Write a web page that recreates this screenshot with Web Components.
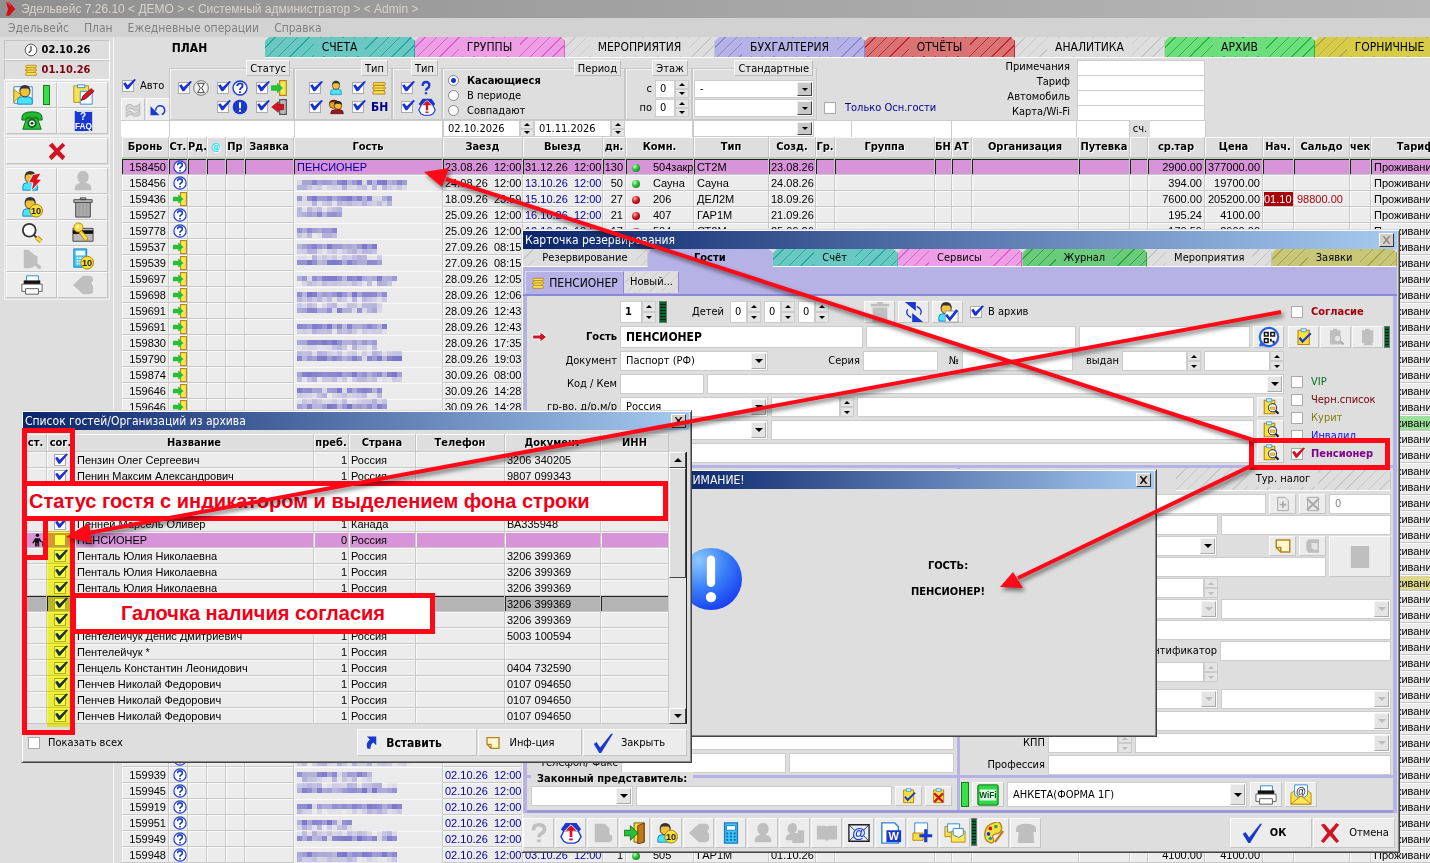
<!DOCTYPE html>
<html lang="ru">
<head>
<meta charset="utf-8">
<title>Эдельвейс 7.26.10</title>
<style>
html,body{margin:0;height:100%;overflow:hidden;background:#dedede}
</style>
</head>
<body>
<pms-app></pms-app>
<script>
const BASE = `
*{box-sizing:border-box}
:host{display:block;font:11px/14px "DejaVu Sans Condensed","Liberation Sans",sans-serif;color:#000}
:host([hidden]){display:none}
button,input,select{font:inherit;color:inherit;margin:0;border-radius:0;min-width:0}
.b{display:flex;align-items:center;justify-content:center;gap:8px;padding:0;background:#ececec;border:1px solid;border-color:#fafafa #c4c4c4 #c4c4c4 #fafafa;white-space:nowrap;flex:none}
.t{background:#fff;border:1px solid #ccc;padding:0 5px;outline:0}
.c{appearance:none;width:12px;height:12px;background:#fff;border:1px solid #aaa;flex:none;display:grid}
.c:checked::before{content:"";width:14px;height:11px;margin:-2px 0 0 -1px;background:#1830d8;clip-path:polygon(8% 45%,24% 35%,40% 62%,88% 5%,100% 12%,44% 98%,32% 98%)}
.c.red:checked::before{background:#d01020}
label{white-space:nowrap}
.r{display:flex;align-items:stretch;gap:3px}
.lb{display:flex;align-items:center;justify-content:flex-end;white-space:nowrap;flex:none}
.g{flex:1}
.led{width:8px;border:1px solid #777;background:repeating-linear-gradient(#063 0 2px,#021 2px 3px);flex:none}
.led.on{background:#38e048;border-color:#1a7a20}
`;
function define(name, html, css = "", setup) {
  const tpl = document.createElement("template");
  customElements.define(name, class extends HTMLElement {
    connectedCallback() {
      if (this.shadowRoot) return;
      tpl.innerHTML = `<style>${BASE}${css}</style>` + (typeof html === "function" ? html(this) : html);
      this.attachShadow({ mode: "open" }).append(tpl.content.cloneNode(true));
      if (setup) setup(this.shadowRoot, this);
    }
  });
}

/* ---------- icons ---------- */
const man = (x = 0) => `<g transform="translate(${x})"><path d="M3 22v-4q0-4 4-4h8q4 0 4 4v4z" fill="#48e4fa" stroke="#1880d0"/><circle cx="11" cy="8.500" r="5.500" fill="#f0c238" stroke="#333"/><path d="M5 8q0-7 6-7t6 7l-2-3H7z" fill="#333"/></g>`;
const coin = `<circle cx="16.500" cy="16" r="7" fill="#fadf38" stroke="#a07a18"/><text x="16.500" y="20" text-anchor="middle" font-family="Liberation Sans" font-weight="700" font-size="10" fill="#222">10</text>`;
const clip = `<path d="M4 3h15v19H4z" fill="#f8e438" stroke="#b88418" stroke-width="1.500"/><path d="M8 1h7v4H8z" fill="#d8f4ff" stroke="#2888d0"/>`;
const G = "#bfbfbf";
const ICONS = {
  logo: `<path d="M6 2h5l9 10-9 10H6l3-10z" fill="#d01018"/><path d="M6 2l5 0 3 6z" fill="#ff4050"/>`,
  clock: `<circle cx="12" cy="12" r="10" fill="#fff" stroke="#444" stroke-width="1.500"/><path d="M12 5v8l-4 4" fill="none" stroke="#222" stroke-width="1.800"/>`,
  coins: `<path d="M4 4h17v3l-2 2 3 3-3 3 2 3v3H3v-3l2-3-3-3 3-3-2-2z" fill="#fae858" stroke="#b88418" stroke-width="1.500"/><path d="M4 8h16M3 12h17M4 16h16" stroke="#b88418" stroke-width="1.700"/>`,
  client: `<path d="M1 3h20v18H1z" fill="#fff" stroke="#2888d8"/><path d="M1 6l8 6-8 8z" fill="#f4dc40" stroke="#b88418"/>${man(2)}`,
  notes: `<path d="M2 2h16v18H2z" fill="#f8e450" stroke="#b88418"/><path d="M6 1h8v3H6z" fill="#fff" stroke="#2888d0"/><path d="M9 8h13v14H9z" fill="#fff" stroke="#2888d0"/><path d="M10 18l2-5 9-8 3 3-9 8z" fill="#d81828" stroke="#801018"/>`,
  phone: `<path d="M1 8q0-6 11-6t11 6v3h-6V8H7v3H1z" fill="#20b830" stroke="#0a6818"/><path d="M6 9h12l4 12H2z" fill="#28c038" stroke="#0a6818"/><circle cx="12" cy="14.500" r="4" fill="#fff" stroke="#0a6818" stroke-width="2"/><circle cx="12" cy="14.500" r="1.500" fill="#222"/>`,
  faq: `<path d="M3 1h19v22H3z" fill="#1838d0"/><path d="M5 1h17v1H5z" fill="#fff"/><text x="12" y="11" text-anchor="middle" font-family="Liberation Sans" font-weight="700" font-size="11" fill="#fff">?</text><text x="12.500" y="21" text-anchor="middle" font-family="Liberation Sans" font-weight="700" font-size="9" fill="#fff">FAQ</text>`,
  cross: `<path d="M3 6l4-3 5 6 6-6 3 3-6 6 6 6-3 4-6-6-6 6-3-4 6-6z" fill="#d01424"/>`,
  bolt: `${man(-1)}<path d="M13 5l9-2-4 7h5L11 23l2-9H8z" fill="#e01020" stroke="#fff"/>`,
  gman: `<path d="M3 22v-3q1-4 6-5-4-3-3-8 1-5 6-5t6 5q1 5-3 8 5 1 6 5v3z" fill="${G}"/>`,
  man10: man(-1) + coin,
  trash: `<path d="M4 7h16v16H4z" fill="#aaa" stroke="#444"/><path d="M2 4h20v3H2zM9 2h6v2H9z" fill="#bbb" stroke="#444"/><path d="M8 9v12M12 9v12M16 9v12" stroke="#999"/>`,
  gtrash: `<path d="M4 7h16v16H4zM2 3h20v3H2zM9 1h6v2H9z" fill="${G}"/>`,
  find: `<circle cx="9" cy="9" r="7" fill="#fff" stroke="#333" stroke-width="2"/><path d="M14 14l3 3" stroke="#333" stroke-width="2"/><path d="M17 17l5 4" stroke="#b88418" stroke-width="5"/><path d="M17 17l5 4" stroke="#f8e040" stroke-width="3"/>`,
  key: `<path d="M1 7h22v14H1z" fill="#bbb" stroke="#444"/><path d="M1 9h22v4H1z" fill="#111"/><circle cx="7" cy="6" r="5" fill="#f8e040" stroke="#b88418"/><path d="M10 9l7 8v3h-3l-6-8z" fill="#f8e040" stroke="#b88418"/><circle cx="6" cy="5" r="1.500" fill="#fff"/>`,
  gshape: `<path d="M3 2h5l6 5 4 2v8l4 3v2l-3 1-4-4-2 2-3 1H3z" fill="${G}"/>`,
  calc10: `<path d="M2 1h14v20H2z" fill="#40c8f4" stroke="#1878c0"/><path d="M4 3h10v5H4z" fill="#fff"/><path d="M5 11h8M5 14h8M5 17h8" stroke="#fff" stroke-width="2" stroke-dasharray="2 1"/>${coin}`,
  calc: `<path d="M5 1h14v22H5z" fill="#40c8f4" stroke="#1878c0" stroke-width="1.500"/><path d="M7 4h10v5H7z" fill="#fff" stroke="#1878c0"/><path d="M7 12.500h10M7 16h10M7 19.500h10" stroke="#0a60a8" stroke-width="2" stroke-dasharray="2 2"/>`,
  print: `<path d="M6 2h13v7H6z" fill="#fff" stroke="#2888d0"/><path d="M3 7h18v5H3z" fill="#111"/><path d="M1 11h22v8H1z" fill="#fff" stroke="#555"/><path d="M5 16h14v6H5z" fill="#fff" stroke="#555"/>`,
  gback: `<path d="M1 12L12 2h7q4 0 4 5l-2 3 2 3v6q-1 3-5 3h-6z" fill="${G}"/>`,
  wave: `<path d="M3 7q5-5 9 0 4 2 9-3v7q-5 4-9 0-4-3-9 2zM3 16q5-5 9 0 4 2 9-3v5q-5 4-9 1-4-3-9 2z" fill="#d4d4d4" stroke="${G}" stroke-width="1.500"/>`,
  undo: `<path d="M9 13a6 6 0 1 1 8 5" fill="none" stroke="#1838d0" stroke-width="2"/><path d="M2 7v12h12z" fill="#1838d0"/>`,
  hour: `<circle cx="12" cy="12" r="11" fill="#eee" stroke="#777" stroke-width="1.500"/><path d="M7 5h10l-4 7 4 7H7l4-7z" fill="#fff" stroke="#444" stroke-width="1.500"/>`,
  quest: `<circle cx="12" cy="12" r="10.500" fill="#fff" stroke="#1838d0" stroke-width="2"/><path d="M8 9q0-4 4-4t4 3.500q0 2-2.500 3.500-1.500 1-1.500 3M12 17v2.500" fill="none" stroke="#1838d0" stroke-width="2.800"/>`,
  excl: `<circle cx="12" cy="12" r="11" fill="#1838d0"/><path d="M12 5v9M12 16v3" stroke="#fff" stroke-width="3"/>`,
  din: `<path d="M13 1h10v22H13z" fill="#f8e850" stroke="#b88418" stroke-width="1.800"/><path d="M0 8h9V4l9 8-9 8v-4H0z" fill="#28c038"/>`,
  dout: `<path d="M13 1h10v22H13z" fill="#bbb" stroke="#555" stroke-width="1.800"/><path d="M19 8h-8V4l-10 8 10 8v-4h8z" fill="#d81020" stroke="#801018"/>`,
  man: man(1),
  pair: `<circle cx="8" cy="8" r="6" fill="#e8a028" stroke="#402000"/><path d="M2 7q0-6 7-6t6 6l-3-2H5z" fill="#5a2808"/><circle cx="15" cy="10" r="5.500" fill="#f8c030" stroke="#402000"/><path d="M9 9q0-6 6-6t6 6l-3-2h-6z" fill="#222"/><path d="M4 22q0-6 6-6h8q5 0 5 6z" fill="#a01828" stroke="#400"/>`,
  qm: `<path d="M7 9q0-6 5-6t5 5q0 3-3 4.500Q12 14 12 16M12 18.500v3" fill="none" stroke="#1838d0" stroke-width="3.500"/>`,
  gq: `<path d="M6 9q0-6 6-6t6 5q0 3-3.500 4.500Q12 14 12 16.500M12 19v3" fill="none" stroke="${G}" stroke-width="4"/>`,
  crown: `<path d="M4 10h16l3 6-3 5-4 2H8l-4-2-3-5z" fill="#fff" stroke="#1838d0" stroke-width="1.500"/><path d="M6 1h12l5 7-3 3-4-3H8l-4 3-3-3z" fill="#1838d0"/><path d="M12 3l7 7h-5v7h-4v-7H5z" fill="#d81020" stroke="#fff"/><path d="M10 19h4" stroke="#d81020" stroke-width="2"/>`,
  sync: `<path d="M2 1h12v10z" fill="#1838d0"/><path d="M22 23H10V13z" fill="#1838d0"/><path d="M15 6q7 3 4 9M9 18q-7-3-4-9" fill="none" stroke="#1838d0" stroke-width="1.500"/>`,
  mancheck: `${man(-1)}<path d="M9 11h14v12H9z" fill="#fff" stroke="#999"/><path d="M10 15l4 5 8-10" fill="none" stroke="#1838d0" stroke-width="3"/>`,
  go: `<path d="M1 9h11V4l10 8-10 8v-5H1z" fill="#d01424" stroke="#fff" stroke-width="1.500"/>`,
  qr: `<circle cx="12" cy="12" r="10" fill="#fff" stroke="#2860e8" stroke-width="2.500"/><path d="M1 22l2-6 5 6z" fill="#2860e8"/><path d="M7 7h4v4H7zM14 7h4v4h-4zM7 14h4v4H7z" fill="none" stroke="#111" stroke-width="1.600"/><path d="M13 14h2v2h3v3h-2v-2h-3z" fill="#111"/>`,
  clipok: `${clip}<path d="M6 13l4 5 11-11" fill="none" stroke="#1838d0" stroke-width="3"/>`,
  clipx: `${clip}<path d="M5 8l13 13M18 8L5 21" stroke="#d01424" stroke-width="3.500"/>`,
  clipfind: `<path d="M3 3h14v18H3z" fill="#f8e438" stroke="#b88418" stroke-width="1.500"/><path d="M6 1h7v4H6z" fill="#d8f4ff" stroke="#2888d0"/><circle cx="14" cy="13" r="5.500" fill="#fff" stroke="#446" stroke-width="1.500"/><path d="M11 12h6v3h-6z" fill="#f8dc40" stroke="#b88418"/><path d="M18 17l4 4" stroke="#222" stroke-width="3"/>`,
  gclipfind: `<path d="M4 3h4V1h6v2h4v19H4z" fill="${G}"/><circle cx="14" cy="14" r="4.500" fill="#e4e4e4" stroke="#aaa"/><path d="M18 18l4 4" stroke="#aaa" stroke-width="3"/>`,
  gclip: `<path d="M4 3h4V1h6v2h5v17h-2l2 3H6l1-3H4z" fill="${G}"/>`,
  wifi: `<rect x="1" y="1" width="22" height="22" rx="2" fill="#30d848" stroke="#1a8a28" stroke-width="1.500"/><rect x="3" y="6" width="18" height="12" fill="#d8ffe0"/><text x="12" y="15.500" text-anchor="middle" font-family="Liberation Sans" font-weight="700" font-size="9" fill="#084818">WiFi</text>`,
  mail: `<path d="M1 10L12 2l11 8v12H1z" fill="#f8e040" stroke="#b88418"/><path d="M5 1h14v11l-7 5-7-5z" fill="#fff" stroke="#2888d0"/><text x="12" y="12" text-anchor="middle" font-family="Liberation Sans" font-weight="700" font-size="11" fill="#223">@</text><path d="M1 22l11-9 11 9z" fill="#fae858" stroke="#b88418"/>`,
  exit: `<path d="M11 1h11v21H11z" fill="#f8e040" stroke="#805010"/><path d="M15 4l7-3v21l-7 2z" fill="#c07818" stroke="#603808"/><path d="M0 9h7V4l8 8-8 8v-5H0z" fill="#28c038" stroke="#0a7818"/>`,
  gman2: `<path d="M2 20v-3q1-4 5-4-4-3-3-7t5-5q5 0 5 5t-3 6h4V9h7v14H9v-3z" fill="${G}"/>`,
  gbook: `<path d="M1 4h9l2 1 2-1h9v15h-9l-2 2-2-2H1z" fill="${G}"/>`,
  gdoc: `<path d="M3 2h11l5 5v6l3 2v5l-3 2H3z" fill="${G}"/>`,
  gphone: `<path d="M1 8q0-6 11-6t11 6v3h-3l1 12H3l1-12H1z" fill="${G}"/>`,
  at: `<path d="M1 3h22v18H1z" fill="#e8f0ff" stroke="#222" stroke-width="1.500"/><path d="M1 3l6 6M23 3l-6 6M1 21l6-6M23 21l-6-6" stroke="#222"/><text x="12" y="17" text-anchor="middle" font-family="Liberation Sans" font-weight="700" font-size="15" fill="#1838d0">@</text>`,
  word: `<path d="M2 1h14l4 4v18H2z" fill="#fff" stroke="#2888d0" stroke-width="1.500"/><path d="M7 9h16v13H7z" fill="#1838d0"/><text x="15" y="20" text-anchor="middle" font-family="Liberation Sans" font-weight="700" font-size="12" fill="#fff">W</text>`,
  add: `<path d="M3 1h14v12H3z" fill="#fff" stroke="#2888d0"/><path d="M1 12h11v8H1z" fill="#f8e040" stroke="#b88418"/><path d="M15 8v14M8 15h14" stroke="#1838d0" stroke-width="3.500"/>`,
  mails: `<path d="M1 5h14v11H1z" fill="#f8e040" stroke="#b88418"/><path d="M4 2h13v9H4z" fill="#fff" stroke="#2888d0"/><path d="M8 10h15v12H8z" fill="#fae858" stroke="#b88418"/><path d="M10 7h11v7l-5 3-6-3z" fill="#fff" stroke="#2888d0"/>`,
  palette: `<path d="M12 1Q3 3 2 12t7 11q4-1 2-5t3-5 6-4-1-7-7-1z" fill="#f8e040" stroke="#b88418" stroke-width="1.500"/><circle cx="8" cy="7" r="2" fill="#d01424"/><circle cx="6" cy="13" r="2" fill="#1838d0"/><circle cx="14" cy="5" r="2" fill="#28a838"/><circle cx="8" cy="18" r="2" fill="#20a0a0"/><path d="M22 10L13 22" stroke="#c07818" stroke-width="2.500"/>`,
  note: `<path d="M3 4h18v16H9l-6-6z" fill="#fff8d0" stroke="#b88418" stroke-width="2"/><path d="M3 14h6v6" fill="none" stroke="#b88418" stroke-width="2"/>`,
  gnote: `<path d="M6 3h14v18H6l-3-4V7z" fill="${G}"/><path d="M10 8h8v9h-5l-3-3z" fill="#e4e4e4"/>`,
  insert: `<path d="M5 1h16v15l-5-5q-5 3-5 11H6q-4-9 4-16z" fill="#1838d0"/>`,
  tick: `<path d="M3 13l3-2 4 6L22 2h2L11 23H9z" fill="#1838d0"/>`,
  bigx: `<path d="M2 3l4-1 6 7 7-8 3 2-7 9 7 9-3 2-7-8-7 8-3-2 7-9z" fill="#d01424"/>`,
  pens: `<circle cx="11" cy="4" r="3" fill="#111"/><path d="M7 9h8l4 7h-3l-2-3v10h-3v-6h-1v6H7v-9l-3 4-2-1z" fill="#111"/><path d="M20 14v9" stroke="#111" stroke-width="1.500"/>`,
  gadd: `<path d="M4 2h11l5 5v15H4z" fill="#e8e8e8" stroke="#aaa" stroke-width="1.500"/><path d="M12 8v10M7 13h10" stroke="#aaa" stroke-width="2.500"/>`,
  gdel: `<path d="M4 2h16v20H4z" fill="#e8e8e8" stroke="#aaa" stroke-width="1.500"/><path d="M3 4l18 17M21 4L3 21" stroke="#aaa" stroke-width="3"/>`,
  gbox: `<path d="M2 0h20v24H2z" fill="${G}"/>`,
  ball: `<defs><radialGradient id="g" cx=".3" cy=".2" r=".9"><stop offset="0" stop-color="#8cc8ff"/><stop offset=".5" stop-color="#3a80f8"/><stop offset="1" stop-color="#1438f0"/></radialGradient></defs><circle cx="12" cy="12" r="12" fill="url(#g)"/><path d="M12 4.500v9" stroke="#fff" stroke-width="3.200" stroke-linecap="round"/><circle cx="12" cy="19" r="2" fill="#fff"/>`
};
define("pms-icon", el => `<svg viewBox="0 0 24 24" aria-hidden="true">${ICONS[el.getAttribute("name")] || ""}</svg>`,
  `:host{display:inline-flex;flex:none;width:22px;height:22px}svg{width:100%;height:100%;display:block}
   :host([size="14"]){width:14px;height:14px}:host([size="16"]){width:16px;height:16px}:host([size="18"]){width:18px;height:18px}:host([size="62"]){width:62px;height:62px}`);

/* ---------- form controls ---------- */
define("spin-box", el => `<input class="t" aria-label="${el.getAttribute("label")}" value="${el.getAttribute("value") || ""}"><div><button aria-label="Больше"></button><button aria-label="Меньше"></button></div>`,
  `:host{display:flex}input.t{flex:1;width:10px;padding:0 0 0 4px}div{width:14px;flex:none;display:grid;grid-template-rows:1fr 1fr}
   :host([bold]) input{font-weight:bold}
   button{border:1px solid #ccc;background:#e4e4e4;padding:0;display:grid;place-items:center}
   button::before{content:"";border:3px solid transparent;border-top:0;border-bottom:3px solid #000}
   button+button::before{border-bottom:0;border-top:3px solid #000}
   :host([off]) button::before{border-bottom-color:#bbb;border-top-color:#bbb}`);
define("drop-list", el => `<select class="t" aria-label="${el.getAttribute("label")}"><option>${el.getAttribute("value") || ""}</option></select><i></i>`,
  `:host{display:grid;grid-template:100%/100%;min-width:0}
   select,i{grid-area:1/1}select{appearance:none;width:100%;height:100%}
   i{justify-self:end;align-self:center;width:15px;height:calc(100% - 4px);margin-right:2px;background:#e4e4e4;border:1px solid;border-color:#f4f4f4 #aaa #aaa #f4f4f4;display:grid;place-items:center;pointer-events:none}
   i::before{content:"";border:4px solid transparent;border-bottom:0;border-top:4px solid #000}
   :host([deep]) i{background:#c8c8c8;border-color:#eee #444 #444 #eee}:host([deep]) i::before{border-width:3px 3px 0}
   :host([off]) i::before{border-top-color:#bbb}`);

/* ---------- tabs: "name|fill|line" separated by ; ---------- */
define("tab-strip", el => el.getAttribute("tabs").split(";").map(s => {
    const [n, f, l] = s.split("|");
    return `<button role="tab" class="${l ? "" : "on"}" style="--f:${f};--l:${l || f}"><span>${n}</span></button>`;
  }).join(""),
  `:host{display:flex}
   button{flex:1;border:0;padding:0;height:100%;clip-path:polygon(0 4px,4px 0,calc(100% - 4px) 0,100% 4px,100% 100%,0 100%);
     background:repeating-linear-gradient(135deg,transparent 0 7px,var(--l) 7px 8px),var(--f);border-right:1px solid var(--l);border-bottom:1px solid #fff}
   button.on{background:var(--f);font-weight:bold;border-bottom:0}
   span{background:var(--f);padding:2px 8px}
   :host([wide]) button{flex:0 0 150px}`);

/* ---------- windows ---------- */
define("float-window", el => `<header><span>${el.getAttribute("caption")}</span><button aria-label="Закрыть окно"></button></header><slot></slot>`,
  `:host{display:flex;flex-direction:column;position:absolute;background:#dedede;border:1px solid;border-color:#d8d8d8 #444 #444 #d8d8d8;box-shadow:inset 1px 1px #fff,inset -1px -1px #888;padding:1px 2px 2px 1px}
   header{height:18px;flex:none;display:flex;align-items:center;justify-content:space-between;background:linear-gradient(90deg,#0a246a,#a6caf0);color:#fff;font-size:12px;padding:0 3px 0 2px}
   button{width:15px;height:14px;padding:0;background:#d4d0c8;border:1px solid;border-color:#fff #333 #333 #fff;display:grid;place-items:center}
   button::before{content:"";width:8px;height:8px;background:#000;clip-path:polygon(0 0,20% 0,50% 35%,80% 0,100% 0,62% 50%,100% 100%,80% 100%,50% 65%,20% 100%,0 100%,38% 50%)}
   :host([inactive]) button::before{background:#888}
   ::slotted(*){flex:1;min-height:0}`);

/* ---------- left tool panel ---------- */
const ib = (n, t, s = 22) => `<button class="b" aria-label="${t}"><pms-icon name="${n}" size="${s}"></pms-icon></button>`;
define("side-panel", `
  <div class="d"><pms-icon name="clock" size="14"></pms-icon><b>02.10.26</b></div>
  <div class="d x"><pms-icon name="coins" size="14"></pms-icon><b>01.10.26</b></div>
  <div class="k"><button class="b" aria-label="Клиент"><pms-icon name="client"></pms-icon><span class="led on"></span></button>${ib("notes", "Заметки")}${ib("phone", "Телефон")}${ib("faq", "Справка")}</div>
  <div class="k one">${ib("cross", "Закрыть", 22)}</div>
  <div class="k">${ib("bolt", "Быстрый заезд")}${ib("gman", "Гость")}${ib("man10", "Счёт гостя")}${ib("trash", "Удалить")}${ib("find", "Поиск")}${ib("key", "Ключ")}${ib("gshape", "Событие")}${ib("calc10", "Касса")}${ib("print", "Печать")}${ib("gback", "Назад")}</div>`,
  `:host{padding:3px 3px 0 4px}
   .d{height:20px;display:flex;align-items:center;justify-content:center;gap:4px;font-size:11px;border:1px solid;border-color:#c4c4c4 #fff #fff #c4c4c4}
   .x{color:#800010}
   .k{display:grid;grid-template-columns:1fr 1fr;grid-auto-rows:26px;padding:1px;border:1px solid #f0f0f0}
   .k.one{grid-template-columns:1fr;padding:1px}.led{height:20px;width:7px}`);

/* ---------- filters ---------- */
const ck = (n, on = 1) => `<input class="c" type="checkbox" aria-label="${n}" ${on ? "checked" : ""}>`;
define("filter-panel", `
  <div class="top">
    <div class="auto"><label class="r"><input class="c" type="checkbox" checked>Авто</label><div class="r z">${ib("wave", "Обновить", 18)}${ib("undo", "Вернуть", 18)}</div></div>
    <fieldset style="width:125px"><legend>Статус</legend><div class="m s3">${ck("Ожидание")}<pms-icon name="hour" size="16"></pms-icon>${ck("Запрос")}<pms-icon name="quest" size="16"></pms-icon>${ck("Заезд")}<pms-icon name="din" size="16"></pms-icon>
      <span></span><span></span>${ck("Важно")}<pms-icon name="excl" size="16"></pms-icon>${ck("Выезд")}<pms-icon name="dout" size="16"></pms-icon></div></fieldset>
    <fieldset style="width:98px"><legend>Тип</legend><div class="m s2">${ck("Гость")}<pms-icon name="man" size="16"></pms-icon>${ck("Оплата")}<pms-icon name="coins" size="16"></pms-icon>${ck("Группа")}<pms-icon name="pair" size="16"></pms-icon>${ck("Безнал")}<b>БН</b></div></fieldset>
    <fieldset style="width:50px"><legend>Тип</legend><div class="m s1">${ck("Вопрос")}<pms-icon name="qm" size="16"></pms-icon>${ck("Корона")}<pms-icon name="crown" size="18"></pms-icon></div></fieldset>
    <fieldset style="width:183px"><legend>Период</legend><div class="rad"><label><input type="radio" name="p" checked><b>Касающиеся</b></label><label><input type="radio" name="p">В периоде</label><label><input type="radio" name="p">Совпадают</label></div></fieldset>
    <fieldset style="width:67px"><legend>Этаж</legend><div class="fl"><div class="r"><span class="lb g">с</span><spin-box label="Этаж с" value="0"></spin-box></div><div class="r"><span class="lb g">по</span><spin-box label="Этаж по" value="0"></spin-box></div></div></fieldset>
    <fieldset style="width:125px"><legend>Стандартные</legend><div class="fl"><drop-list deep label="Фильтр 1" value="-"></drop-list><drop-list deep label="Фильтр 2"></drop-list></div></fieldset>
    <label class="only"><input class="c" type="checkbox">Только Осн.гости</label>
    <div class="ex"><label for="a">Примечания</label><input class="t" id="a"><label for="b">Тариф</label><input class="t" id="b"><label for="c">Автомобиль</label><input class="t" id="c"><label for="d">Карта/Wi-Fi</label><input class="t" id="d"></div>
  </div>
  <div class="row"><input class="t" aria-label="Бронь" style="width:49px"><input class="t" aria-label="Заявка" style="width:125px"><input class="t" aria-label="Гость" style="width:148px"><spin-box label="Начало" value="02.10.2026" style="width:91px"></spin-box><spin-box label="Конец" value="01.11.2026" style="width:91px"></spin-box><input class="t" aria-label="Комната" style="width:68px"><drop-list deep label="Тип номера" style="width:121px"></drop-list><input class="t" aria-label="Создано" style="width:38px"><input class="t" aria-label="Группа" style="width:100px"><input class="t" aria-label="Организация" style="width:125px"><input class="t" aria-label="Путевка" style="width:53px"><label for="e" class="sc">сч.</label><input class="t" id="e" style="width:56px"></div>`,
  `.top{display:flex;height:62px;padding-top:2px}.top>*{flex:none}
   .auto{width:48px}.auto label{padding:13px 0 0 1px;height:38px;gap:6px;align-items:center}.auto .z{gap:1px;height:22px}.auto .b{width:24px}
   .auto .r.z .b{height:23px}
   fieldset{margin:0;padding:0 0 0 8px;border:1px solid #c8c8c8;box-shadow:inset 1px 1px #f4f4f4;height:60px;min-width:0}
   fieldset legend{margin-left:auto;margin-right:3px;padding:0 3px;height:16px;line-height:15px;background:#e4e4e4;border:1px solid;border-color:#fafafa #bbb #bbb #fafafa}
   .m{display:grid;align-items:center;grid-auto-rows:19px}
   .s3{grid-template-columns:15px 24px 15px 24px 15px 20px;padding-top:2px}.s2{grid-template-columns:19px 24px 19px 24px;padding:2px 0 0 6px}.s1{grid-template-columns:17px 20px;padding-top:2px}
   .m b{color:#000088;font-size:12px}
   .rad{display:grid;grid-auto-rows:15px;margin-top:-3px}.rad label{display:flex;gap:8px;align-items:center}
   .rad input{appearance:none;width:11px;height:11px;border:1px solid #888;border-radius:50%;background:#fff;margin-left:-3px}.rad input:checked{background:radial-gradient(#1830d8 0 2px,#fff 3px)}
   .fl{display:grid;grid-auto-rows:18px;row-gap:1px;margin:4px 0 0 -7px;padding-right:2px}.fl spin-box{width:34px}
   .only{display:flex;align-items:center;gap:9px;width:142px;padding:36px 0 0 7px;color:#000098}
   .ex{display:grid;grid-template-columns:111px 128px;grid-auto-rows:15px;column-gap:7px;text-align:right}.ex .t{border-bottom:0}
   .row{display:flex;height:17px}.row>*{flex:none}.row .t{border-width:1px 1px 0 0}.sc{width:20px;text-align:center;line-height:17px}`);

/* ---------- booking grid ---------- */
const COLS = [["Бронь",47],["Ст.",19],["Рд.",19],["@",19],["Пр",19],["Заявка",49],["Гость",149],["Заезд",80],["Выезд",80],["дн.",23],["Комн.",68],["Тип",75],["Созд.",47],["Гр.",19],["Группа",100],["БН",17],["АТ",20],["Организация",107],["Путевка",51],["",18],["ср.тар",57],["Цена",58],["Нач.",31],["Сальдо",56],["чек",21],["Тариф",90]];
/* id, status, guest width, arrival, departure, days, dot, room, type, created, rate, price */
const R = [
 ["158450","quest",0,"23.08.26 12:00","31.12.26 12:00","130","g","504закр","СТ2М","23.08.26","2900.00","377000.00"],
 ["158456","quest",110,"24.08.26 12:00","13.10.26 12:00","50","g","Сауна","Сауна","24.08.26","394.00","19700.00"],
 ["159436","din",95,"18.09.26 23:59","15.10.26 12:00","27","r","206","ДЕЛ2М","18.09.26","7600.00","205200.00"],
 ["159527","quest",45,"25.09.26 12:00","16.10.26 12:00","21","r","407","ГАР1М","21.09.26","195.24","4100.00"],
 ["159778","quest",40,"25.09.26 12:00","12.10.26 12:00","17","r","504","СТ2М","25.09.26","170.59","2900.00"],
 ["159537","din",80,"27.09.26 08:15"],["159539","din",85,"27.09.26 08:15"],["159697","din",100,"28.09.26 12:05"],["159698","din",90,"28.09.26 12:06"],
 ["159691","din",85,"28.09.26 12:43"],["159691","din",90,"28.09.26 12:43"],["159830","din",80,"28.09.26 17:35"],["159790","din",105,"28.09.26 19:03"],
 ["159874","din",105,"30.09.26 08:00"],["159646","din",85,"30.09.26 14:28"],["159646","din",90,"30.09.26 14:28"]];
for (let i = 16; i < 37; i++) R.push([]);
R.push(["","quest",115],["159939","quest",75,"02.10.26 12:00"],["159945","quest",100,"02.10.26 12:00"],["159919","quest",105,"02.10.26 12:00"],["159951","quest",55,"02.10.26 12:00"],["159949","quest",100,"02.10.26 12:00"],
 ["159948","quest",100,"02.10.26 12:00","03.10.26 12:00","1","g","505","ГАР1М","01.10.26","4100.00","4100.00"]);
const masked = (w, seed) => {
  let s = "", n = seed * 7919 + 13;
  const rnd = () => (n = (n * 1103515245 + 12345) & 0x7fffffff) / 0x7fffffff;
  for (let x = 0; x < w; x += 5) {
    const gap = rnd() > .93;
    s += `<path d="M${x} 5h5v5h-5z" fill="#7470c8" opacity="${gap ? .15 : (.4 + rnd() * .55).toFixed(2)}"/><path d="M${x} ${seed % 3 ? 10 : 0}h5v5h-5z" fill="#8c88d0" opacity="${(rnd() * .6).toFixed(2)}"/>`;
  }
  return `<svg width="${w}" height="15" role="img" aria-label="Имя скрыто">${s}</svg>`;
};
const dt = s => s ? s.replace(" ", "&nbsp; ") : "";
define("booking-grid", () => {
  const rows = R.map((r, i) => {
    const late = i > 36, [id = "", st, gw, a, d, n, dot, room, type, made, rate, price] = r;
    const cells = [[id,"e"],[st ? `<pms-icon name="${st}" size="14"></pms-icon>` : "","m"],[""],[""],[""],[""],
      i ? [gw ? masked(gw, i) : "", "w"] : ["ПЕНСИОНЕР", "n"], [dt(a), late ? "n k" : "k"], [dt(d), i ? "n k" : "k"], [n || "", "e"],
      [dot ? `<i class="${dot}"></i>${room}` : "", "q"], [type || ""], [made || "", "k"], [""],[""],[""],[""],[""],[""],[""],[rate || "","e"],[price || "","e"],
      i == 2 ? ["01.10","hot"] : [""], i == 2 ? ["98800.00","rd"] : [""], [""], ["Проживание"]];
    return `<tr class="${i == 0 ? "sel" : i == 16 ? "gr" : i == 26 ? "ye" : ""}">` + cells.map(c => `<td class="${c[1] || ""}">${c[0]}</td>`).join("") + "</tr>";
  }).join("");
  return `<table><colgroup>${COLS.map(c => `<col style="width:${c[1]}px">`).join("")}</colgroup><thead><tr>${COLS.map(c => `<th class="${c[0] == "@" ? "cy" : ""}">${c[0]}</th>`).join("")}</tr></thead><tbody>${rows}</tbody></table>`;
}, `:host{overflow:hidden;padding-left:1px}
   table{table-layout:fixed;border-spacing:0;width:1339px}
   th{height:22px;padding:0;overflow:hidden;white-space:nowrap;background:#dedede;border-right:1px solid #c4c4c4;border-bottom:2px solid #c4c4c4;box-shadow:inset 1px 1px #fafafa;text-shadow:1px 1px #fff}
   .cy{color:#28e0ff}
   td{height:16px;font-family:"Liberation Sans",sans-serif;line-height:14px;padding:0 0 0 3px;overflow:hidden;white-space:nowrap;background:#ececec;border-right:1px solid #cacaca;border-bottom:1px solid #c8c8c8;box-shadow:inset 1px 1px #fafafa}
   .e{text-align:right;padding:0 2px 0 0}.m{padding:0 0 0 4px}.m pms-icon{vertical-align:top}.n{color:#0000a0}.w{background:#ebebeb;border-bottom-color:#ebebeb}.w svg{display:block}
   .k{padding:0 0 0 2px}
   .hot{background:#a80008;color:#fff;padding-left:1px}.rd{color:#b00010}
   .q i{display:inline-block;width:8px;height:8px;border-radius:50%;margin:0 13px -1px 3px}.q{padding-right:0}
   i.g{background:radial-gradient(at 35% 30%,#c0ffc0,#20c030 45%,#0a7018)}i.r{background:radial-gradient(at 35% 30%,#ffb0b0,#d01020 45%,#700)}
   .sel td{background:#d894d8;box-shadow:inset 1px 1px #0a3010}.gr td{background:#9ce09c}.ye td{background:#dcd890}`);

/* ---------- reservation card ---------- */
const inp = (l, st = "") => `<input class="t ${st ? "" : "g"}" aria-label="${l}" style="${st}">`;
define("reservation-card", `
  <tab-strip class="tabs" role="tablist" tabs="Резервирование|#dedede|#c4c4c4;Гости|#b6b2e6;Счёт|#6ac8c2|#28a8a0;Сервисы|#ee9ee4|#dc60cc;Журнал|#6cca7c|#28a83c;Мероприятия|#dedede|#c4c4c4;Заявки|#c8c678|#a8a440"></tab-strip>
  <div class="sub"><button class="s1"><pms-icon name="coins" size="14"></pms-icon>ПЕНСИОНЕР</button><button class="s2">Новый...</button></div>
  <div class="body">
   <section class="one">
    <div class="col">
     <div class="r h"><span class="lb w"></span><spin-box bold label="Взрослых" value="1" style="width:36px"></spin-box><span class="led"></span><span class="lb" style="width:54px">Детей</span><span></span><spin-box label="Дети 1" value="0"></spin-box><spin-box label="Дети 2" value="0"></spin-box><spin-box label="Дети 3" value="0"></spin-box><span style="width:29px"></span>
      ${ib("gtrash", "Удалить гостя")}${ib("sync", "Обновить")}${ib("mancheck", "Проверить")}<label class="arch"><input class="c" type="checkbox" checked>В архив</label></div>
     <div class="r h"><label class="lb w go" for="gname"><pms-icon name="go" size="16"></pms-icon><b>Гость</b></label><input class="t" id="gname" value="ПЕНСИОНЕР" style="width:243px;font-weight:bold;font-size:12px">${inp("Имя", "width:210px")}${inp("Отчество")}${ib("qr", "QR-код")}</div>
     <div class="r"><span class="lb w">Документ</span><drop-list label="Документ" value="Паспорт  (РФ)" style="width:148px"></drop-list><label class="lb" for="ser" style="width:89px">Серия</label><input class="t" id="ser" style="width:75px"><label class="lb" for="num" style="width:18px">№</label><input class="t" id="num" style="width:111px"><span class="lb g">выдан</span><spin-box label="Выдан" style="width:79px"></spin-box><spin-box label="Действует до" style="width:80px"></spin-box></div>
     <div class="r"><label class="lb w" for="kod">Код / Кем</label><input class="t" id="kod" style="width:84px"><drop-list class="g" label="Кем выдан"></drop-list></div>
     <div class="r"><span class="lb w">гр-во, д/р,м/р</span><drop-list label="Гражданство" value="Россия" style="width:148px"></drop-list><spin-box label="Дата рождения" style="width:83px"></spin-box>${inp("Место рождения")}${ib("clipfind", "Найти место", 18)}</div>
     <div class="r"><span class="lb w"></span><drop-list label="Регион" style="width:148px"></drop-list>${inp("Адрес")}${ib("clipfind", "Найти адрес", 18)}</div>
     <div class="r"><span class="lb w"></span>${inp("Дополнительно")}${ib("clipfind", "Найти", 18)}</div>
    </div>
    <div class="flags">
     <label class="h" style="color:#a80010"><input class="c" type="checkbox"><b>Согласие</b></label>
     <div class="r h tools">${ib("clipok", "Анкета", 18)}${ib("gclipfind", "Поиск анкеты", 18)}${ib("gclip", "Скан", 18)}<span class="led"></span></div>
     <label style="color:#087018" class="vip"><input class="c" type="checkbox">VIP</label>
     <label style="color:#780008"><input class="c" type="checkbox">Черн.список</label>
     <label style="color:#808010"><input class="c" type="checkbox">Курит</label>
     <label style="color:#1010f0"><input class="c" type="checkbox">Инвалид</label>
     <label style="color:#800088"><input class="c red" type="checkbox" checked><b>Пенсионер</b></label>
    </div>
   </section>
   <section class="two">
    <div class="left"><div class="r">${inp("Адрес")}</div><div class="r"><label class="lb w" for="tel">Телефон/ Факс</label><input class="t g" id="tel">${inp("Факс")}</div></div>
    <div class="right">
     <tab-strip class="tax" tabs="|#dedede;Тур. налог|#dedede|#c8c8c8"></tab-strip>
     <div class="r"><span class="lb v"></span>${inp("Основание")}${ib("gadd", "Добавить", 16)}${ib("gdel", "Удалить", 16)}<input class="t" aria-label="Сумма" value="0" style="width:62px;color:#888"></div>
     <div class="r"><span class="lb v"></span>${inp("Поле 1")}${inp("Поле 2")}</div>
     <div class="big"><span class="lb v"></span><div class="col g"><div class="r"><drop-list label="Вид" style="width:169px"></drop-list><span class="g"></span>${ib("note", "Заметка", 18)}${ib("gnote", "Копия", 18)}</div><div class="r">${inp("Описание")}</div></div>${ib("gbox", "Фото")}</div>
     <div class="r"><span class="lb v"></span><spin-box off class="g" label="Дата"></spin-box><span class="g"></span></div>
     <div class="r"><span class="lb v"></span><drop-list off class="g" label="Список 1"></drop-list><drop-list off class="g" label="Список 2"></drop-list></div>
     <div class="r"><span class="lb v"></span>${inp("Строка")}</div>
     <div class="r"><span class="lb v"></span><label class="lb g" for="idn">Идентификатор</label><input class="t" id="idn" style="width:171px"></div>
     <div class="r"><span class="lb v"></span><spin-box off class="g" label="Срок"></spin-box><span class="g"></span></div>
     <div class="r gap"><span class="lb v"></span><drop-list off class="g" label="Список 3"></drop-list><drop-list off class="g" label="Список 4"></drop-list></div>
     <div class="r"><span class="lb v"></span><drop-list off class="g" label="Список 5"></drop-list></div>
     <div class="r"><span class="lb v">КПП</span><spin-box off label="КПП" style="width:84px"></spin-box><drop-list off class="g" label="КПП место"></drop-list></div>
     <div class="r"><label class="lb v" for="prof">Профессия</label><input class="t g" id="prof"></div>
    </div>
   </section>
   <section class="three">
    <div class="left"><b class="cap">Законный представитель:</b><div class="r"><drop-list label="Кем приходится" style="width:102px"></drop-list>${inp("Представитель")}${ib("clipok", "Выбрать", 16)}${ib("clipx", "Очистить", 16)}</div></div>
    <div class="r right"><span class="led on"></span>${ib("wifi", "WiFi")}<drop-list label="Форма" value="АНКЕТА(ФОРМА 1Г)" style="width:240px"></drop-list>${ib("print", "Печать")}${ib("mail", "Отправить")}</div>
   </section>
  </div>
  <footer>${["gq","crown","gdoc","exit","man10","gback","calc","gman","gman2","gbook","at","word","add","mails","led","palette","gphone"].map(n => n == "led" ? `<span class="led"></span>` : ib(n, n)).join("")}<span class="g"></span><button class="b ok yes"><pms-icon name="tick"></pms-icon><b>ОК</b></button><button class="b ok"><pms-icon name="bigx"></pms-icon>Отмена</button></footer>`,
  `:host{display:flex;flex-direction:column}
   .tabs{height:18px;flex:none}
   .sub{background:#b6b2e6;height:29px;display:flex;padding:4px 0 0 2px;border-bottom:2px solid #8c88d8;flex:none}
   .sub button{border:1px solid;border-color:#dcdaf8 #8c88d8 transparent #dcdaf8;display:flex;gap:4px;align-items:center;justify-content:center;padding:0;white-space:nowrap}
   .s1{width:99px;background:#b6b2e6;font-size:12px}.s2{width:55px;height:22px;background:repeating-linear-gradient(135deg,transparent 0 7px,#ccc 7px 8px),#dedede}
   .body{border:solid #b6b2e6;border-width:0 4px;flex:none;background:#dedede}
   .one{display:flex;gap:4px;padding:5px 2px 2px 0;border-bottom:3px solid #b6b2e6}
   .one>.col{flex:1}.col{display:grid;row-gap:3px;min-width:0}
   .r{height:20px}.h{height:22px!important}
   .w{width:90px}.v{width:84px}
   .go{justify-content:space-between;padding-left:5px}
   spin-box{flex:none;width:31px}spin-box.g{flex:1}
   .r .b{width:27px}.h .b{width:31px}
   .arch{display:flex;align-items:center;gap:6px;padding-left:4px}
   .flags{width:103px}.flags label{display:flex;align-items:center;gap:8px;height:18px;padding-left:3px}.tools{gap:1px;margin-top:3px}.flags .vip{margin-top:25px}.tools .led{width:6px}
   .two,.three{display:grid;grid-template-columns:1fr 1fr}
   .two{height:310px;border-bottom:3px solid #b6b2e6}
   .left{border-right:3px solid #b6b2e6;padding:0 3px 4px 1px}
   .two .left{display:flex;flex-direction:column;justify-content:flex-end;gap:3px;padding-bottom:2px}
   .right{padding:0 2px 0 1px;min-width:0}
   .two .right{display:flex;flex-direction:column;gap:1px}.tax{height:23px;margin-bottom:2px}
   .right>.gap{margin-top:6px}.right>.gap~.r{margin-top:1px}
   .big{display:flex;gap:3px}.big .col{row-gap:1px}.big>.b{width:62px}.col .r{min-width:0}
   .three{height:35px;border-bottom:3px solid #9c98dc}
   .three .left{display:flex;flex-direction:column;justify-content:flex-end;padding:0 5px 4px 4px}
   .cap{margin-top:-12px;background:#dedede;align-self:flex-start;padding:0 6px;line-height:14px}
   .three .right{padding-top:4px;height:29px}.three .right .b{width:32px}
   footer{display:flex;gap:1px;padding:5px 2px 0 0}footer .b{width:31px;height:30px;flex:none}footer .led{width:6px;height:28px}footer .ok{width:82px}footer .yes{padding-right:16px}`);

/* ---------- archive list ---------- */
const L = [["Пензин Олег Сергеевич",1,"Россия","3206 340205"],["Пенин Максим Александрович",1,"Россия","9807 099343"],["","","",""],["","","",""],["Пенней Марсель Оливер",1,"Канада"," ВА335948"],["ПЕНСИОНЕР",0,"Россия",""],
 ["Пенталь Юлия Николаевна",1,"Россия","3206 399369"],["Пенталь Юлия Николаевна",1,"Россия","3206 399369"],["Пенталь Юлия Николаевна",1,"Россия","3206 399369"],["","","","3206 399369"],["","","","3206 399369"],["Пентелейчук Денис Дмитриевич",1,"Россия","5003 100594"],["Пентелейчук *",1,"Россия",""],["Пенцель Константин Леонидович",1,"Россия","0404 732590"],["Пенчев Николай Федорович",1,"Россия","0107 094650"],["Пенчев Николай Федорович",1,"Россия","0107 094650"],["Пенчев Николай Федорович",1,"Россия","0107 094650"]];
define("guest-list", `<div class="box"><table><colgroup><col style="width:22px"><col style="width:28px"><col><col style="width:35px"><col style="width:67px"><col style="width:89px"><col style="width:96px"><col style="width:68px"></colgroup>
  <thead><tr>${["ст.","сог.","Название","преб.","Страна","Телефон","Документ","ИНН"].map(h => `<th>${h}</th>`).join("")}</tr></thead>
  <tbody>${L.map((r, i) => `<tr class="${i == 5 ? "p" : i == 9 ? "s" : ""}"><td class="i">${i == 5 ? '<pms-icon name="pens" size="14"></pms-icon>' : ""}</td><td class="z">${ck("Согласие", i != 5)}</td><td>${r[0]}</td><td class="e">${r[1]}</td><td>${r[2]}</td><td></td><td>${r[3]}</td><td></td></tr>`).join("")}</tbody></table>
  <div class="sb"><button aria-label="Вверх"></button><span></span><button class="dn" aria-label="Вниз"></button></div></div>
  <footer><label><input class="c" type="checkbox">Показать всех</label><span class="g"></span><button class="b ins"><pms-icon name="insert" size="14"></pms-icon><b>Вставить</b></button><button class="b m inf"><pms-icon name="note" size="16"></pms-icon>Инф-ция</button><button class="b m cls"><pms-icon name="tick"></pms-icon>Закрыть</button></footer>`,
  `:host{padding:4px 2px 0 2px;display:flex;flex-direction:column}
   .box{display:flex}table{flex:1;width:10px;table-layout:fixed;border-spacing:0}
   th{height:18px;padding:0;background:#dedede;border-right:1px solid #c4c4c4;border-bottom:1px solid #c4c4c4;box-shadow:inset 1px 1px #fafafa;text-shadow:1px 1px #fff;white-space:nowrap;overflow:hidden}
   td{height:16px;font-family:"Liberation Sans",sans-serif;line-height:14px;padding:0 0 0 2px;overflow:hidden;white-space:nowrap;background:#ececec;border-right:1px solid #cacaca;border-bottom:1px solid #c8c8c8;box-shadow:inset 1px 1px #fafafa}
   .e{text-align:right;padding-right:1px}.z{padding-left:7px}.i{padding-left:6px}.i pms-icon{vertical-align:top}.z .c{margin-top:1px}
   .p td{background:#d894d8}.s td{background:#b4b4b4;box-shadow:inset 1px 1px #222}
   .sb{width:18px;margin-top:18px;display:flex;flex-direction:column;border-right:1px solid #222;background:#e6e6e6}
   .sb button,.sb span{background:#dedede;border:1px solid;border-color:#fff #444 #444 #fff;padding:0;height:16px;display:grid;place-items:center}
   .sb span{height:110px}.dn{margin-top:auto}
   .sb button::before{content:"";border:4px solid transparent;border-top:0;border-bottom:4px solid #000}.sb .dn::before{border-bottom:0;border-top:4px solid #000}
   footer{display:flex;gap:1px;padding:5px 0 4px;flex:1;align-items:stretch}footer label{display:flex;gap:8px;align-items:center;padding-left:3px}
   footer .b{width:120px}footer .m{width:104px}.ins{padding-right:28px;font-size:12px}.b.inf{padding-right:20px}.b.cls{padding-right:14px}`);

define("alert-message", `<pms-icon name="ball" size="62"></pms-icon><div><b>ГОСТЬ:</b><b>ПЕНСИОНЕР!</b></div>`,
  `:host{display:flex;align-items:center;padding:0 0 65px 5px}div{flex:1;display:grid;justify-items:center;row-gap:12px}`);

/* ---------- callouts ---------- */
define("callout-layer", `
  <div class="hl"></div>
  <div class="f a"></div><div class="f st"></div><div class="f p"></div>
  <div class="f note n1">Статус гостя с индикатором и выделением фона строки</div>
  <div class="f note n2">Галочка наличия согласия</div>
  <svg viewBox="0 0 1430 863" width="1430" height="863" aria-hidden="true"><g fill="#ff0818" stroke="#ff0818">
   <path d="M1281 312L88 533M1253 440L446 179M1253 465L1018 578" fill="none" stroke-width="4"/>
   <path stroke="none" d="M66 537l23-14 3 20zM424 172l25-4-7 19zM1000 587l13-15 10 16z"/></g></svg>`,
  `:host{position:absolute;inset:0;pointer-events:none;overflow:hidden}
   :host>*,div,svg{position:absolute}
   svg{left:0;top:0;filter:drop-shadow(2px 3px 2px rgba(0,0,0,.5))}
   .f{border:5px solid #ff0818}
   .hl{left:47px;top:531px;width:26px;height:196px;background:#ffff40;mix-blend-mode:multiply}
   .a{left:22px;top:428px;width:53px;height:307px}.st{left:22px;top:516px;width:26px;height:44px}.p{left:1249px;top:438px;width:141px;height:32px}
   .note{background:#fff;color:#f00018;font:bold 20px/30px "Liberation Sans",sans-serif;white-space:nowrap}
   .n1{left:22px;top:481px;width:646px;height:40px;padding-left:2px}
   .n2{left:71px;top:593px;width:364px;height:41px;text-align:center}`);

/* ---------- application shell ---------- */
define("pms-app", `
  <header><pms-icon name="logo" size="16"></pms-icon>Эдельвейс 7.26.10 &lt; ДЕМО &gt; &lt; Системный администратор &gt; &lt; Admin &gt;</header>
  <nav><button>Эдельвейс</button><button>План</button><button>Ежедневные операции</button><button>Справка</button></nav>
  <main><side-panel></side-panel>
   <div class="work"><tab-strip wide role="tablist" tabs="ПЛАН|#dedede;СЧЕТА|#6ac8c2|#28a8a0;ГРУППЫ|#ee9ee4|#dc60cc;МЕРОПРИЯТИЯ|#dedede|#c8c8c8;БУХГАЛТЕРИЯ|#b6b2e6|#8c88d8;ОТЧЁТЫ|#da7474|#c02830;АНАЛИТИКА|#dedede|#c8c8c8;АРХИВ|#6cde7c|#28b83c;ГОРНИЧНЫЕ|#d6cc48|#b4a850"></tab-strip>
    <div class="pane"><filter-panel></filter-panel><booking-grid></booking-grid></div></div></main>
  <float-window class="card" inactive caption="Карточка резервирования"><reservation-card></reservation-card></float-window>
  <float-window class="alert" caption="ВНИМАНИЕ!"><alert-message></alert-message></float-window>
  <float-window class="list" caption="Список гостей/Организаций из архива"><guest-list></guest-list></float-window>
  <callout-layer></callout-layer>`,
  `:host{position:relative;height:100vh;overflow:hidden;background:#dedede}
   header{height:18px;display:flex;align-items:center;gap:3px;padding-left:2px;font:12px/16px "Liberation Sans",sans-serif;color:#d8d4cc;background:linear-gradient(90deg,#909090,#b8b8b8)}
   nav{height:19px;display:flex;align-items:center;gap:15px;padding-left:8px;background:#d2d2d2;font-size:12px;color:#808080}
   nav button{border:0;background:none;padding:0}
   main{display:flex}side-panel{width:114px;flex:none;border-right:1px solid #f4f4f4}
   .work{flex:1;min-width:0;overflow:hidden}tab-strip{height:21px;font-size:12px;padding-left:1px}.pane{padding-left:7px}
   .card{left:521px;top:229px;width:879px;height:624px}
   .alert{left:673px;top:469px;width:484px;height:268px}
   .list{left:21px;top:410px;width:671px;height:353px}`);
</script>
</body>
</html>
